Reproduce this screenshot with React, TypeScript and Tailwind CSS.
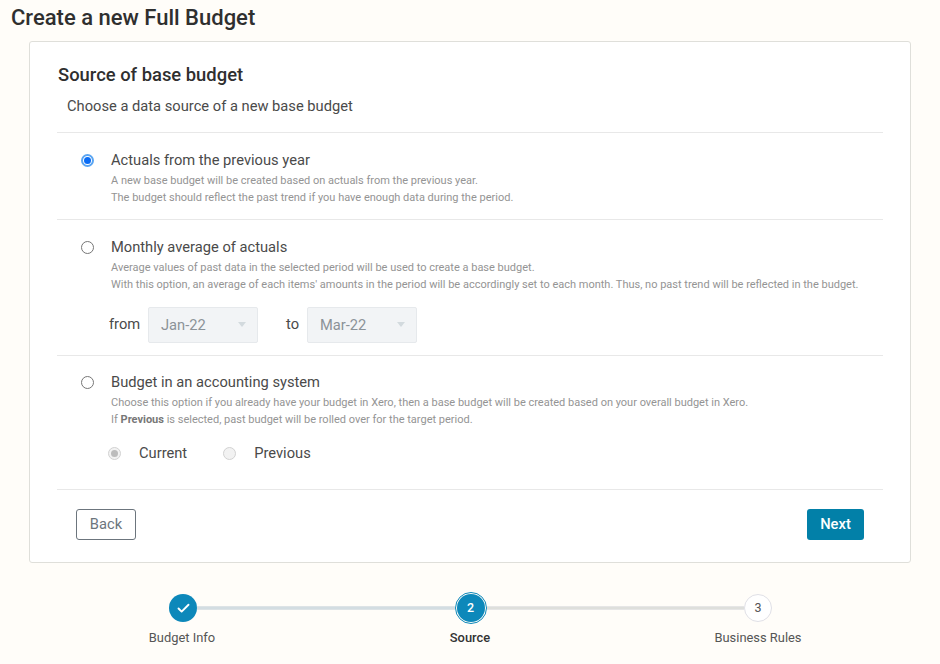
import type { ReactNode } from 'react'
import { Check } from 'lucide-react'

function Radio({ checked, disabled }: { checked?: boolean; disabled?: boolean }) {
  if (disabled) {
    return (
      <span className="flex h-[13px] w-[13px] shrink-0 items-center justify-center rounded-full border border-[#d2d2d2] bg-[#f2f2f2]">
        {checked && <span className="h-[7px] w-[7px] rounded-full bg-[#bcbcbc]" />}
      </span>
    )
  }
  if (checked) {
    return (
      <span className="flex h-[13px] w-[13px] shrink-0 items-center justify-center rounded-full border-2 border-[#5aa5f2] bg-white">
        <span className="h-[7px] w-[7px] rounded-full bg-[#0a6cf5]" />
      </span>
    )
  }
  return <span className="h-[13px] w-[13px] shrink-0 rounded-full border border-[#767676] bg-white" />
}

function MonthSelect({ value }: { value: string }) {
  return (
    <div className="flex h-9 w-[110px] items-center justify-between rounded-[2px] border border-[#e6e9ec] bg-[#f2f4f6] pl-3 pr-[11px] text-[14.7px] text-[#8b9298]">
      {value}
      <span className="mb-[2px] h-0 w-0 border-x-[4px] border-t-[5px] border-x-transparent border-t-[#d3dade]" />
    </div>
  )
}

function Option({
  checked,
  title,
  className,
  children,
}: {
  checked?: boolean
  title: string
  className: string
  children: ReactNode
}) {
  return (
    <div className={`border-t border-[#e8e8e8] pl-6 ${className}`}>
      <div className="flex h-[17px] items-center">
        <Radio checked={checked} />
        <span className="ml-[17px] text-[14.7px] text-[#4a4a4a]">{title}</span>
      </div>
      <div className="mt-1 ml-[30px] text-[11px] leading-[16.5px] text-[#949494]">{children}</div>
    </div>
  )
}

export default function App() {
  return (
    <div className="h-[664px] w-[940px] overflow-hidden bg-[#fffdf9] font-['Roboto',sans-serif]">
      <h1 className="pl-[11px] pt-[3px] text-[22px] leading-[30px] font-medium text-[#2f2f2f]">
        Create a new Full Budget
      </h1>
      <div className="mx-[29px] mt-2 h-[522px] rounded-[3px] border border-[#dfdfda] bg-white px-[27px] pt-[21px]">
        <h2 className="pl-px text-[18.4px] leading-[24px] font-medium text-[#2f2f2f]">Source of base budget</h2>
        <p className="mt-[9px] pl-[10px] text-[14.7px] leading-[20px] text-[#4a4a4a]">
          Choose a data source of a new base budget
        </p>

        <div className="mt-4">
          <Option checked title="Actuals from the previous year" className="h-[87px] pt-[19px]">
            <p>A new base budget will be created based on actuals from the previous year.</p>
            <p>The budget should reflect the past trend if you have enough data during the period.</p>
          </Option>
          <Option title="Monthly average of actuals" className="h-[136px] pt-[19px]">
            <p>Average values of past data in the selected period will be used to create a base budget.</p>
            <p>
              With this option, an average of each items&apos; amounts in the period will be accordingly set to each
              month. Thus, no past trend will be reflected in the budget.
            </p>
            <div className="mt-[14px] -ml-[2px] flex items-center text-[14.7px] text-[#4a4a4a]">
              <span className="mb-[2px] w-[39px]">from</span>
              <MonthSelect value="Jan-22" />
              <span className="mb-[2px] ml-7 w-[21px]">to</span>
              <MonthSelect value="Mar-22" />
            </div>
          </Option>
          <Option title="Budget in an accounting system" className="h-[134px] pt-[18px]">
            <p>
              Choose this option if you already have your budget in Xero, then a base budget will be created based on
              your overall budget in Xero.
            </p>
            <p>
              If <b className="font-bold text-[#777]">Previous</b> is selected, past budget will be rolled over for the
              target period.
            </p>
            <div className="mt-[17px] -ml-[3px] flex items-center text-[14.7px] text-[#4a4a4a]">
              <Radio checked disabled />
              <span className="ml-[18px]">Current</span>
              <span className="ml-9">
                <Radio disabled />
              </span>
              <span className="ml-[18px]">Previous</span>
            </div>
          </Option>
          <div className="flex items-center justify-between border-t border-[#e8e8e8] px-[19px] pt-[19px]">
            <button className="h-[31px] w-[60px] rounded-[3px] border border-[#6c757d] bg-white text-[14.7px] text-[#6c757d]">
              Back
            </button>
            <button className="h-[31px] w-[57px] rounded-[3px] bg-[#0280a8] text-[14.7px] font-medium text-white">
              Next
            </button>
          </div>
        </div>
      </div>

      <div className="mt-[29px] ml-[169px] flex w-[603px] items-center">
        <span className="flex h-7 w-7 shrink-0 items-center justify-center rounded-full bg-[#0d88ba] text-white">
          <Check size={15} strokeWidth={3} />
        </span>
        <span className="h-1 flex-1 border-y border-[#dde3e6] bg-[#d3dde2]" />
        <span className="flex h-8 w-8 shrink-0 items-center justify-center rounded-full border border-[#0d88ba] bg-[#fffdf9]">
          <span className="flex h-7 w-7 items-center justify-center rounded-full bg-[#0d88ba] text-[12.5px] font-medium text-white">
            2
          </span>
        </span>
        <span className="h-1 flex-1 border-y border-[#e6e6e6] bg-[#dedfdc]" />
        <span className="flex h-7 w-7 shrink-0 items-center justify-center rounded-full border border-[#e0e0e6] bg-white text-[12.5px] text-[#555]">
          3
        </span>
      </div>
      <div className="mt-[6px] ml-[38px] grid w-[864px] grid-cols-3 text-center text-[12.9px] leading-[16px] text-[#555]">
        <span>Budget Info</span>
        <span className="font-medium text-[#333]">Source</span>
        <span>Business Rules</span>
      </div>
    </div>
  )
}
